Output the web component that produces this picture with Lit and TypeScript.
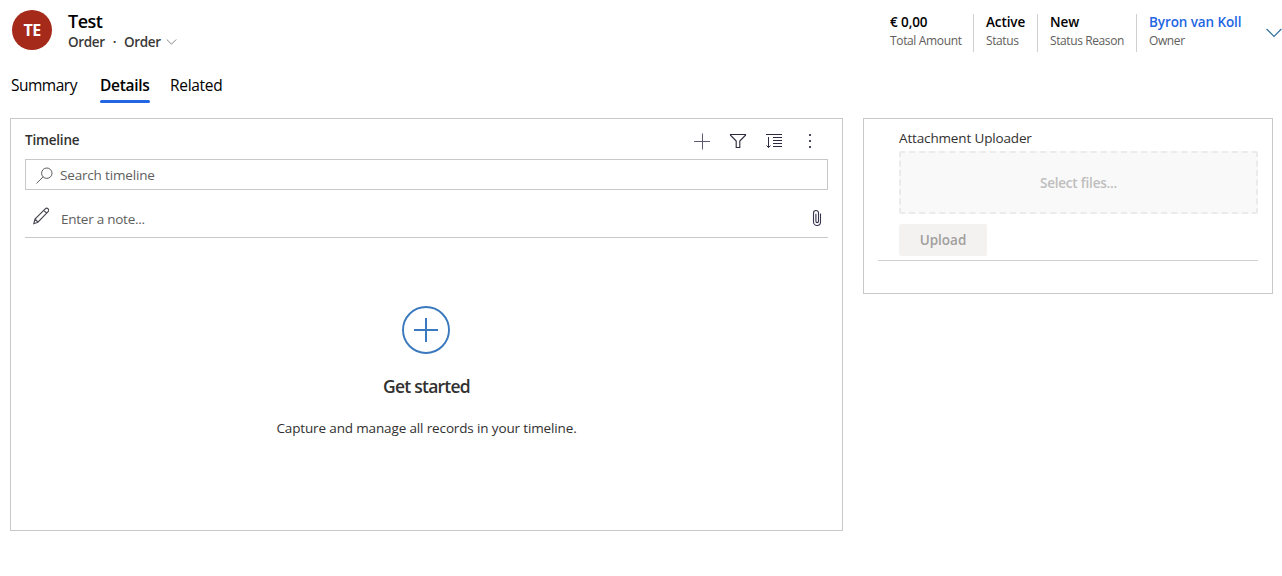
import { LitElement, html, css, svg } from "lit";
import { customElement } from "lit/decorators.js";

const facts = [
  { value: "€ 0,00", label: "Total Amount", cls: "amount" },
  { value: "Active", label: "Status", cls: "status" },
  { value: "New", label: "Status Reason", cls: "reason" },
  { value: "Byron van Koll", label: "Owner", cls: "owner" },
];

const icon = (w: number, h: number, body: unknown, cls = "") =>
  html`<svg class="icon ${cls}" width=${w} height=${h} viewBox="0 0 ${w} ${h}">${body}</svg>`;

@customElement("record-header")
class RecordHeader extends LitElement {
  static styles = css`
    :host { display: flex; height: 60px; box-sizing: border-box; padding: 10px 0 0 12px; }
    .icon { fill: none; display: block; flex: none; }
    .avatar { width: 40px; height: 40px; border-radius: 50%; background: #a52a1a; color: #fff;
      font-size: 16px; font-weight: 700; line-height: 41px; text-align: center; letter-spacing: -0.6px; flex: none; }
    .names { margin-left: 16px; width: 822px; flex: none; }
    .title { font-size: 18px; font-weight: 600; line-height: 23px; color: #000; letter-spacing: -0.5px; }
    .sub { display: flex; align-items: center; font-size: 13.5px; font-weight: 600; line-height: 18px; color: #3b3a39; letter-spacing: -0.35px; }
    .entity { width: 37px; }
    .dot { width: 19px; text-align: center; }
    .form { width: 42px; }
    .facts { display: flex; margin-top: 4px; height: 38px; flex: none; }
    .fact { box-sizing: border-box; border-right: 1px solid #d2d0ce; padding-left: 12px; white-space: nowrap; }
    .amount { width: 84px; padding-left: 0; }
    .status { width: 64px; }
    .reason { width: 99px; }
    .owner { width: 129px; border: 0; }
    .value { font-size: 13.5px; font-weight: 600; line-height: 17px; color: #000; letter-spacing: -0.1px; }
    .label { font-size: 12px; line-height: 20px; color: #605e5c; letter-spacing: -0.4px; }
    .amount .label { letter-spacing: -0.35px; }
    .owner .value { color: #2266e3; }
    .more { margin-top: 18px; }
  `;
  render() {
    return html`
      <div class="avatar">TE</div>
      <div class="names">
        <div class="title">Test</div>
        <div class="sub">
          <span class="entity">Order</span><span class="dot">·</span><span class="form">Order</span>
          ${icon(11, 8, svg`<path d="M.8 1.5 5.5 6.2 10.2 1.5" stroke="#8a8886" />`)}
        </div>
      </div>
      <div class="facts">
        ${facts.map((f) => html`<div class="fact ${f.cls}"><div class="value">${f.value}</div><div class="label">${f.label}</div></div>`)}
      </div>
      ${icon(16, 10, svg`<path d="M.6 1 8 8.4 15.4 1" stroke="#2f6f9c" stroke-width="1.1" />`, "more")}
    `;
  }
}

@customElement("form-tabs")
class FormTabs extends LitElement {
  static styles = css`
    :host { display: flex; height: 43px; padding: 0 0 15px 11px; font-size: 15.5px; line-height: 20px; color: #000; white-space: nowrap; }
    .tab { box-sizing: border-box; height: 43px; padding-top: 15px; }
    .summary { width: 89px; letter-spacing: -0.5px; }
    .details { width: 50px; margin-right: 20px; font-weight: 600; letter-spacing: -0.3px; }
    .related { letter-spacing: -0.3px; }
    .bar { height: 3px; margin-top: 5px; border-radius: 2px; background: #2266e3; }
  `;
  render() {
    return html`
      <div class="tab summary">Summary</div>
      <div class="tab details">Details<div class="bar"></div></div>
      <div class="tab related">Related</div>
    `;
  }
}

@customElement("timeline-card")
class TimelineCard extends LitElement {
  static styles = css`
    :host { display: block; box-sizing: border-box; width: 833px; height: 413px; border: 1px solid #c8c8c8; padding: 12px 14px 0; }
    .icon { fill: none; display: block; flex: none; }
    .head { display: flex; align-items: center; height: 20px; margin-bottom: 8px; }
    .title { flex: 1; font-size: 13.5px; font-weight: 600; color: #323130; line-height: 18px; padding-bottom: 2px; letter-spacing: -0.2px; }
    .tools { display: flex; gap: 18px; padding-right: 9px; }
    .search { box-sizing: border-box; height: 31px; border: 1px solid #c8c8c8; display: flex; align-items: center; padding-left: 10px; }
    .search-text, .note-text { font-size: 13.5px; line-height: 18px; color: #605e5c; letter-spacing: -0.17px; }
    .search-icon { margin-top: 2px; }
    .search-text { margin-left: 7px; }
    .note { box-sizing: border-box; height: 48px; border-bottom: 1px solid #c8c8c8; display: flex; padding: 17px 6px 0 8px; }
    .note-text { flex: 1; margin: 3px 0 0 12px; letter-spacing: -0.25px; }
    .clip { margin-top: 2px; }
    .empty { display: flex; flex-direction: column; align-items: center; padding-top: 68px; }
    .ring { margin-right: 1px; }
    .start { margin-top: 20px; font-size: 17.5px; font-weight: 600; line-height: 25px; color: #323130; letter-spacing: -0.75px; }
    .hint { margin-top: 20px; font-size: 13.5px; line-height: 18px; color: #323130; letter-spacing: -0.14px; }
  `;
  render() {
    return html`
      <div class="head">
        <div class="title">Timeline</div>
        <div class="tools">
          ${icon(18, 18, svg`<path d="M1 9.5H17M9.5 1.5V17.5" stroke="#5b5a72" />`)}
          ${icon(18, 18, svg`<path d="M1.5 2.5H16.5V3.2L10.8 9V15.5H7.2V9L1.5 3.2Z" stroke="#2b2a3e" stroke-width="1.1" />`)}
          ${icon(18, 18, svg`<path d="M1 2.5H17M8 5.5H17M8 8.5H17M8 11.5H17M8 14.5H17M3.5 5V15.5M1.5 13.5 3.5 15.5 5.5 13.5" stroke="#2b2a3e" />`)}
          ${icon(18, 18, svg`<path d="M8 2h2v2H8zM8 8h2v2H8zM8 14h2v2H8z" fill="#4c4a5c" />`)}
        </div>
      </div>
      <div class="search">
        ${icon(17, 17, svg`<circle cx="10.8" cy="6.2" r="5.2" stroke="#605e5c" /><path d="M7.1 9.9.5 16.4" stroke="#605e5c" />`, "search-icon")}
        <div class="search-text">Search timeline</div>
      </div>
      <div class="note">
        ${icon(16, 18, svg`<path d="M.8 16.7 2 12 12.2 1.8a2 2 0 0 1 2.9 2.9L4.9 15.2ZM2 12l2.9 3.2M10.7 3.3l2.9 2.9" stroke="#484650" stroke-width="1.15" />`)}
        <div class="note-text">Enter a note...</div>
        ${icon(10, 18, svg`<path d="M8.5 4.5V13a3.5 3.5 0 0 1-7 0V4a2.5 2.5 0 0 1 5 0V12.3a1.3 1.3 0 0 1-2.6 0V4.8" stroke="#35334d" stroke-width="1.1" />`, "clip")}
      </div>
      <div class="empty">
        ${icon(48, 48, svg`<circle cx="24" cy="24" r="23" stroke="#3a79bd" stroke-width="1.9" /><path d="M12 24H36M24 12V36" stroke="#3a79bd" stroke-width="2" />`, "ring")}
        <div class="start">Get started</div>
        <div class="hint">Capture and manage all records in your timeline.</div>
      </div>
    `;
  }
}

@customElement("upload-card")
class UploadCard extends LitElement {
  static styles = css`
    :host { display: block; box-sizing: border-box; width: 410px; height: 176px; border: 1px solid #c8c8c8; padding: 10px 14px 0; }
    .field { height: 131px; border-bottom: 1px solid #d2d2d2; padding-left: 21px; }
    .label { font-size: 13.5px; line-height: 18px; color: #323130; letter-spacing: -0.15px; }
    .drop { box-sizing: border-box; margin-top: 4px; height: 63px; border: 2px dashed #ebebeb; border-radius: 2px; background: #f9f9f9;
      text-align: center; font-size: 13.5px; font-weight: 600; line-height: 60px; color: #bebebe; letter-spacing: -0.2px; }
    .button { margin-top: 10px; width: 88px; height: 32px; border-radius: 2px; background: #f3f2f1; color: #a19f9d;
      font-size: 13.5px; font-weight: 600; line-height: 32px; text-align: center; }
  `;
  render() {
    return html`
      <div class="field">
        <div class="label">Attachment Uploader</div>
        <div class="drop"><span class="drop-text">Select files...</span></div>
        <div class="button">Upload</div>
      </div>
    `;
  }
}

@customElement("app-root")
class AppRoot extends LitElement {
  static styles = css`
    :host { display: block; width: 1282px; height: 576px; overflow: hidden; background: #fff; font-family: "Open Sans", "Noto Sans", sans-serif; }
    .cards { display: flex; align-items: flex-start; gap: 20px; padding-left: 10px; }
  `;
  render() {
    return html`
      <record-header></record-header>
      <form-tabs></form-tabs>
      <div class="cards"><timeline-card></timeline-card><upload-card></upload-card></div>
    `;
  }
}
